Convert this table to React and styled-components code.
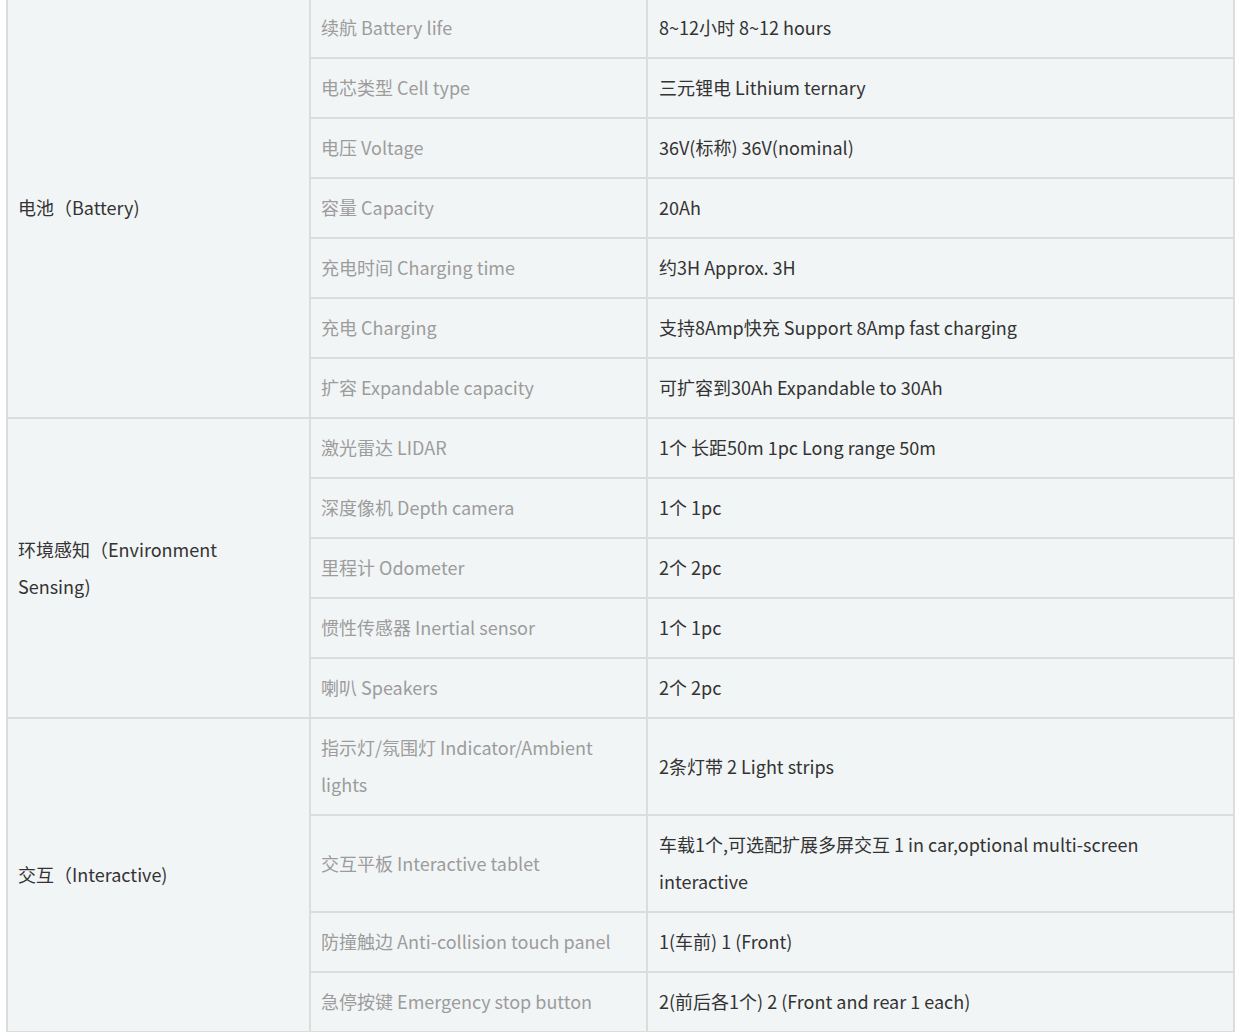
import styled, { createGlobalStyle } from 'styled-components';

const GlobalStyle = createGlobalStyle`
    html, body {
        margin: 0;
        padding: 0;
        background: #ffffff;
    }
    body {
        font-family: "Noto Sans CJK SC", "Noto Sans", sans-serif;
        overflow: hidden;
    }
`

const Wrapper = styled.div`
    padding-left: 6px;
    margin-top: -3px;
`

const SpecTable = styled.table`
    width: 1229px;
    border-collapse: separate;
    border-spacing: 0;
    border: 1px solid #dcdcdc;
    background: #f2f5f6;
    table-layout: fixed;
    font-size: 18px;
    line-height: 37px;
`

const Cell = styled.td`
    border: 1px solid #dcdcdc;
    padding: 10px 10px 11px ${p => (p.$value ? '11px' : '10px')};
    vertical-align: middle;
    color: ${p => (p.$muted ? '#9c9c9c' : '#333333')};
    word-break: normal;
`

const groups = [
    {
        name: <>电池（Battery)</>,
        rows: [
            ['续航 Battery life', '8~12小时 8~12 hours'],
            ['电芯类型 Cell type', '三元锂电 Lithium ternary'],
            ['电压 Voltage', '36V(标称) 36V(nominal)'],
            ['容量 Capacity', '20Ah'],
            ['充电时间 Charging time', '约3H Approx. 3H'],
            ['充电 Charging', '支持8Amp快充 Support 8Amp fast charging'],
            ['扩容 Expandable capacity', '可扩容到30Ah Expandable to 30Ah'],
        ],
    },
    {
        name: <>环境感知（Environment<br />Sensing)</>,
        rows: [
            ['激光雷达 LIDAR', '1个 长距50m 1pc Long range 50m'],
            ['深度像机 Depth camera', '1个 1pc'],
            ['里程计 Odometer', '2个 2pc'],
            ['惯性传感器 Inertial sensor', '1个 1pc'],
            ['喇叭 Speakers', '2个 2pc'],
        ],
    },
    {
        name: <>交互（Interactive)</>,
        rows: [
            [<>指示灯/氛围灯 Indicator/Ambient<br />lights</>, '2条灯带 2 Light strips'],
            ['交互平板 Interactive tablet', <>车载1个,可选配扩展多屏交互 1 in car,optional multi-screen<br />interactive</>],
            ['防撞触边 Anti-collision touch panel', '1(车前) 1 (Front)'],
            ['急停按键 Emergency stop button', '2(前后各1个) 2 (Front and rear 1 each)'],
        ],
    },
]

export default function App() {
    return (
        <>
            <GlobalStyle />
            <Wrapper>
                <SpecTable>
                    <colgroup>
                        <col style={{ width: '303px' }} />
                        <col style={{ width: '337px' }} />
                        <col />
                    </colgroup>
                    <tbody>
                        {groups.map((g, gi) =>
                            g.rows.map((r, ri) => (
                                <tr key={gi + '-' + ri}>
                                    {ri === 0 && <Cell rowSpan={g.rows.length}>{g.name}</Cell>}
                                    <Cell $muted>{r[0]}</Cell>
                                    <Cell $value>{r[1]}</Cell>
                                </tr>
                            ))
                        )}
                    </tbody>
                </SpecTable>
            </Wrapper>
        </>
    )
}
